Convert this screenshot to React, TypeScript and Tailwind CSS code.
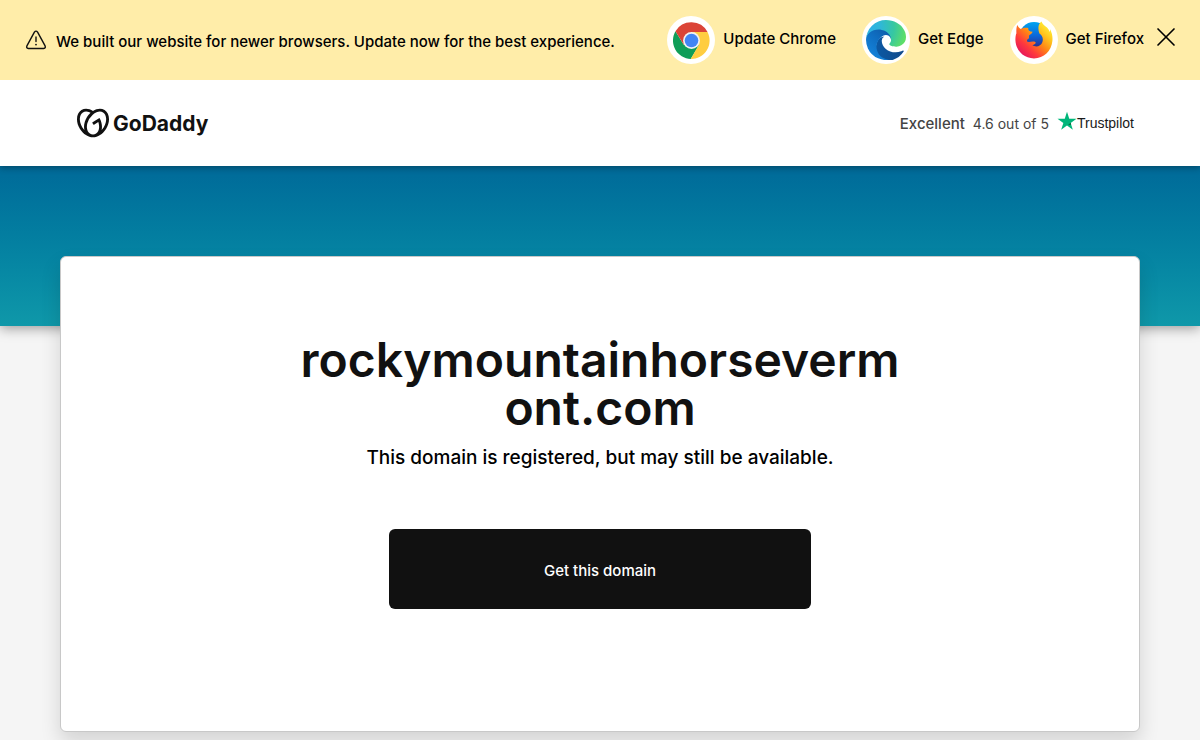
import React, { useState } from 'react';
import { X } from 'lucide-react';
import { SiGodaddy } from 'react-icons/si';

const ChromeIcon = () => (
  <svg viewBox="0 0 48 48" className="size-[37px]" aria-hidden="true">
    <circle cx="24" cy="24" r="24" fill="#fff" />
    <path d="M3.2 12 A24 24 0 0 0 23 48 L34 29.5 L24 24 L14 29.5 Z" fill="#0f9d58" />
    <path d="M44.8 13 A24 24 0 0 1 23 48 L33.6 29.5 L24 13 Z" fill="#ffcd40" />
    <path d="M3.2 12 A24 24 0 0 1 44.8 13 L24 13 L14 29.5 Z" fill="#db4437" />
    <circle cx="24" cy="24" r="11" fill="#f1f1f1" />
    <circle cx="24" cy="24" r="8.8" fill="#4285f4" />
  </svg>
);

const EdgeIcon = () => (
  <svg viewBox="0 0 256 256" className="size-10" aria-hidden="true">
    <defs>
      <linearGradient id="edge-a" x1="63" y1="177" x2="241" y2="177" gradientUnits="userSpaceOnUse">
        <stop offset="0" stopColor="#0c59a4" />
        <stop offset="1" stopColor="#114a8b" />
      </linearGradient>
      <linearGradient id="edge-b" x1="157" y1="100" x2="46" y2="221" gradientUnits="userSpaceOnUse">
        <stop offset="0" stopColor="#0f5fae" />
        <stop offset="0.5" stopColor="#0f70c4" />
        <stop offset="1" stopColor="#1480d6" />
      </linearGradient>
      <radialGradient id="edge-c" cx="26" cy="46" r="235" gradientUnits="userSpaceOnUse">
        <stop offset="0" stopColor="#2bb0e6" />
        <stop offset="0.3" stopColor="#2fb8d6" />
        <stop offset="0.65" stopColor="#36c7a2" />
        <stop offset="1" stopColor="#5fdf66" />
      </radialGradient>
    </defs>
    <path
      fill="url(#edge-a)"
      d="M235.68 195.46a93.73 93.73 0 0 1-10.54 4.71 101.87 101.87 0 0 1-35.9 6.46c-47.32 0-88.54-32.55-88.54-74.32A31.48 31.48 0 0 1 117.13 105c-42.8 1.8-53.8 46.4-53.8 72.53 0 73.88 68.09 81.37 82.76 81.37 7.91 0 19.84-2.3 27-4.56l1.31-.44a128.34 128.34 0 0 0 66.6-52.8 4 4 0 0 0-5.32-5.64z"
    />
    <path
      fill="url(#edge-b)"
      d="M105.73 241.42A79.2 79.2 0 0 1 83 220.08a80.72 80.72 0 0 1 29.5-120.75c3.12-1.47 8.45-4.13 15.54-4a32.35 32.35 0 0 1 25.69 13 31.88 31.88 0 0 1 6.36 18.66c0-.21 24.46-79.6-80-79.6-43.9 0-80 41.66-80 78.21a130.15 130.15 0 0 0 12.11 56 128 128 0 0 0 156.38 67.11 75.55 75.55 0 0 1-62.78-8z"
    />
    <path
      fill="url(#edge-c)"
      d="M152.33 148.86c-.81 1.05-3.3 2.5-3.3 5.66 0 2.61 1.7 5.12 4.72 7.23 14.38 10 41.49 8.68 41.56 8.68a59.56 59.56 0 0 0 30.27-8.35 61.38 61.38 0 0 0 30.43-52.88c.26-22.41-8-37.31-11.34-43.91C223.46 23.84 177.72 0 128 0A128 128 0 0 0 0 126.2c.48-36.54 36.8-66.05 80-66.05 3.5 0 23.46.34 42 10.07 16.34 8.58 24.9 18.94 30.85 29.21 6.18 10.67 7.28 24.15 7.28 29.52s-2.74 13.33-7.8 19.91z"
    />
  </svg>
);

const FirefoxIcon = () => (
  <svg viewBox="0 0 40 40" className="size-10" aria-hidden="true">
    <defs>
      <linearGradient id="fox-body" x1="34" y1="5" x2="7" y2="34" gradientUnits="userSpaceOnUse">
        <stop offset="0" stopColor="#fff13a" />
        <stop offset="0.25" stopColor="#ffc21c" />
        <stop offset="0.5" stopColor="#ff8216" />
        <stop offset="0.75" stopColor="#ff3a3c" />
        <stop offset="1" stopColor="#e6175c" />
      </linearGradient>
      <linearGradient id="fox-globe" x1="22" y1="2" x2="22" y2="29" gradientUnits="userSpaceOnUse">
        <stop offset="0" stopColor="#00a5f0" />
        <stop offset="0.5" stopColor="#0b68da" />
        <stop offset="1" stopColor="#35257e" />
      </linearGradient>
    </defs>
    <circle cx="20" cy="17" r="15" fill="url(#fox-globe)" />
    <path
      fill="url(#fox-body)"
      d="M3.4 5 C4 6.8 5.2 8 6.8 9 C9.4 7.4 12 7.4 14.4 8 C13.8 9.8 14.8 11.2 18.6 11.8 C18.2 13.6 16 14.4 15 15.6 C14.8 17 15.4 17.8 14.6 18.8 C13.4 19.2 12.8 20 13 21.6 C15.4 23 18 20.4 21.4 22 C22.2 23 21 24.4 18.4 25 C21.6 27.8 27 26.4 28.4 22 C29.4 18.6 28.6 15.6 25.4 13.4 C24 9.6 23.6 4.6 27.4 1.6 C28.8 4.4 30.6 6 33 7.6 C34.6 9.2 35.2 10.6 35.4 12 C36 11 36.2 10 36 9 C38 12.8 38.8 16.6 38.4 21 C37.4 31 29.8 38.4 20 38.4 C9.6 38.4 1.8 30.6 1.4 20 C1.4 17.4 1.6 15.2 2.4 13.2 C2.2 10 2.4 7 3.4 5 Z"
    />
  </svg>
);

const WarningIcon = () => (
  <svg viewBox="0 0 24 24" className="size-6 shrink-0" fill="none" stroke="#111" aria-hidden="true">
    <path
      d="M10.4 4.2 L2.9 17.9 Q2 20.2 4.3 20.5 H19.7 Q22 20.2 21.1 17.9 L13.6 4.2 Q12 2 10.4 4.2 Z"
      strokeWidth="1.4"
      strokeLinejoin="round"
    />
    <path d="M12 9 V13.5" strokeWidth="1.4" strokeLinecap="round" />
    <circle cx="12" cy="16.6" r="0.9" fill="#111" stroke="none" />
  </svg>
);

const browsers = [
  { label: 'Update Chrome', Icon: ChromeIcon },
  { label: 'Get Edge', Icon: EdgeIcon },
  { label: 'Get Firefox', Icon: FirefoxIcon },
];

const BrowserBanner: React.FC<{ onClose: () => void }> = ({ onClose }) => (
  <div className="relative z-10 flex h-20 items-center justify-between bg-[#ffeda9] pr-[18px] pl-6 font-medium text-black">
    <div className="flex items-center gap-2">
      <WarningIcon />
      <p className="pt-1 text-[15px]">
        We built our website for newer browsers. Update now for the best experience.
      </p>
    </div>
    <div className="flex items-center gap-[6px]">
      <div className="flex items-center gap-[26px]">
        {browsers.map(({ label, Icon }) => (
          <a key={label} href="#" className="flex items-center gap-2 text-[15px]">
            <span className="flex size-12 items-center justify-center rounded-full bg-white">
              <Icon />
            </span>
            <span className="pb-[2px]">{label}</span>
          </a>
        ))}
      </div>
      <button type="button" aria-label="Close" onClick={onClose} className="pb-[6px]">
        <X className="size-8" strokeWidth={1.25} />
      </button>
    </div>
  </div>
);

const Header = () => (
  <header className="relative flex h-[86px] items-center justify-between bg-white pr-[66px] pl-[77px] shadow-[0_2px_6px_rgba(0,0,0,0.3)]">
    <a href="#" className="flex items-center gap-1 text-[#111]">
      <SiGodaddy className="size-8" />
      <span className="pt-[2px] text-[21px] font-bold">GoDaddy</span>
    </a>
    <a href="#" className="flex items-center gap-2 pt-[2px] text-[#444]">
      <span className="text-[15px] font-medium">Excellent</span>
      <span className="text-sm">4.6 out of 5</span>
      <span className="flex items-center pb-[2px]">
        <svg viewBox="0 0 24 24" className="mb-1 size-5" aria-hidden="true">
          <path
            d="M12 1 L14.7 9.2 H23.4 L16.4 14.3 L19 22.6 L12 17.5 L5 22.6 L7.6 14.3 L0.6 9.2 H9.3 Z"
            fill="#00b67a"
          />
          <path d="M17 16.2 L16.4 14.3 L13.4 16.5 Z" fill="#005128" />
        </svg>
        <span className="font-['Liberation_Sans',Arial,sans-serif] text-sm text-[#191919]">Trustpilot</span>
      </span>
    </a>
  </header>
);

export default function App() {
  const [showBanner, setShowBanner] = useState(true);

  return (
    <div className="min-h-screen bg-[#f5f5f5] font-['Inter',sans-serif]">
      {showBanner && <BrowserBanner onClose={() => setShowBanner(false)} />}
      <Header />
      <div className="h-40 bg-linear-to-b from-[#006a99] to-[#0f98a9] shadow-[0_2px_12px_rgba(0,0,0,0.4)]" />
      <main className="relative -mt-[70px] px-[60px] pb-2">
        <section className="flex flex-col items-center rounded-md border border-[#c8c8c8] bg-white px-6 pt-[79px] pb-[122px] text-center shadow-[0_10px_20px_rgba(0,0,0,0.14)]">
          <h1 className="w-full max-w-[610px] text-5xl/12 font-semibold break-words text-[#111]">
            rockymountainhorsevermont.com
          </h1>
          <p className="mt-[10px] text-[19px]/8 font-medium text-black">
            This domain is registered, but may still be available.
          </p>
          <a
            href="#"
            className="mt-[55px] flex h-20 w-full max-w-[422px] items-center justify-center rounded-md bg-[#111] pt-1 text-[15px] font-medium text-white"
          >
            Get this domain
          </a>
        </section>
      </main>
    </div>
  );
}
